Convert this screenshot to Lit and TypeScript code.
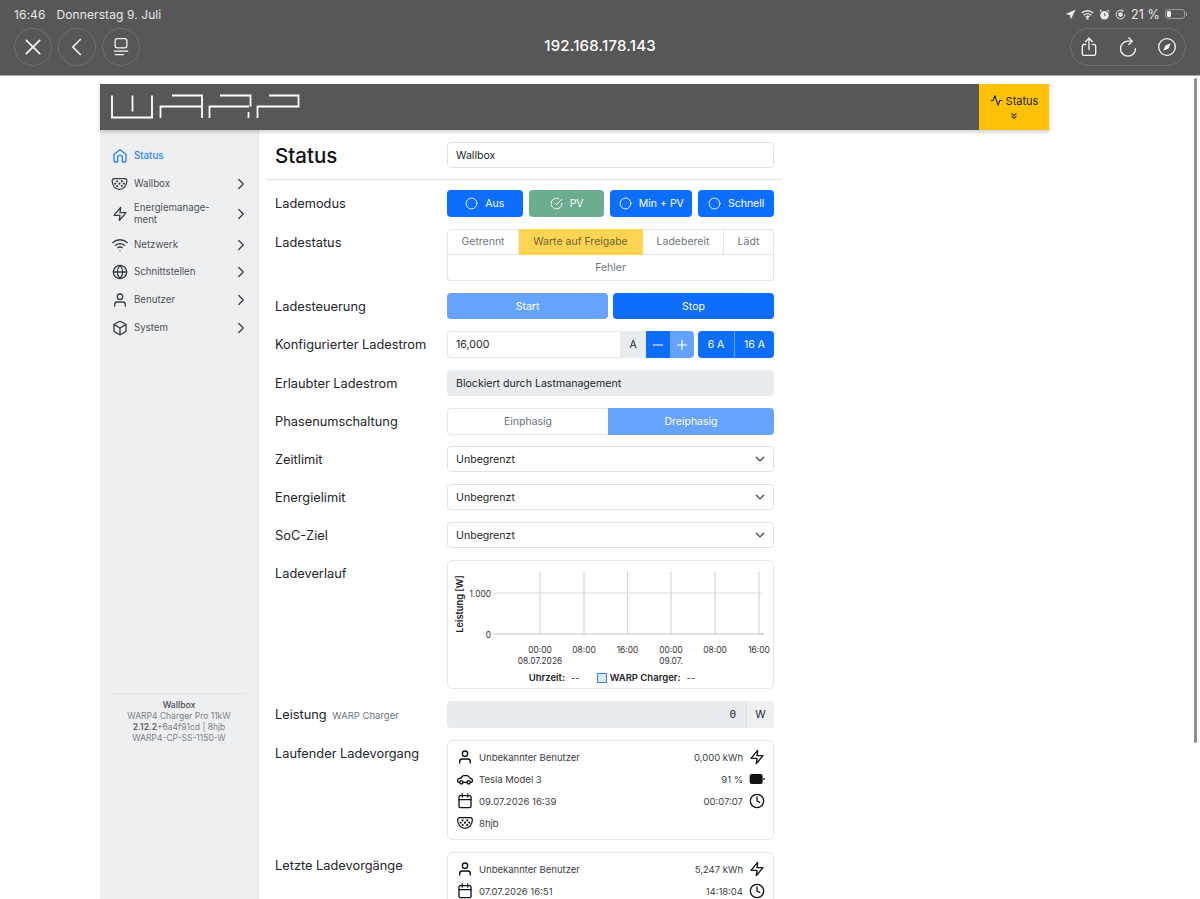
import {LitElement, html, css, svg} from 'lit';
import {customElement} from 'lit/decorators.js';

const feather = (body: unknown, cls = 'ic') => html`<svg class=${cls} viewBox="0 0 24 24" fill="none" stroke="currentColor" stroke-width="2" stroke-linecap="round" stroke-linejoin="round">${body}</svg>`;

const icons = {
  home: svg`<path d="M4 21a1 1 0 0 1-1-1V9.500L12 2.500l9 7V20a1 1 0 0 1-1 1h-4.500v-8a2 2 0 0 0-2-2h-3a2 2 0 0 0-2 2v8z"/>`,
  zap: svg`<polygon points="13 2 3 14 12 14 11 22 21 10 12 10 13 2"/>`,
  wifi: svg`<path d="M1 8.500a16 16 0 0 1 22 0"/><path d="M5 12.600a11 11 0 0 1 14 0"/><path d="M8.600 16.100a6 6 0 0 1 6.800 0"/><line x1="12" y1="20" x2="12" y2="20"/>`,
  globe: svg`<circle cx="12" cy="12" r="10"/><line x1="2" y1="12" x2="22" y2="12"/><path d="M12 2a15.300 15.300 0 0 1 4 10 15.300 15.300 0 0 1-4 10 15.300 15.300 0 0 1-4-10 15.300 15.300 0 0 1 4-10z"/>`,
  user: svg`<path d="M20 21v-2a4 4 0 0 0-4-4H8a4 4 0 0 0-4 4v2"/><circle cx="12" cy="7" r="4"/>`,
  box: svg`<path d="M21 16V8a2 2 0 0 0-1-1.730l-7-4a2 2 0 0 0-2 0l-7 4A2 2 0 0 0 3 8v8a2 2 0 0 0 1 1.730l7 4a2 2 0 0 0 2 0l7-4A2 2 0 0 0 21 16z"/><polyline points="3.270 6.960 12 12.010 20.730 6.960"/><line x1="12" y1="22.080" x2="12" y2="12"/>`,
  chevron: svg`<polyline points="9 18 15 12 9 6"/>`,
  circle: svg`<circle cx="12" cy="12" r="10"/>`,
  check: svg`<path d="M22 11.080V12a10 10 0 1 1-5.930-9.140"/><polyline points="22 4 12 14.010 9 11.010"/>`,
  calendar: svg`<rect x="3" y="4" width="18" height="18" rx="2"/><line x1="16" y1="1.500" x2="16" y2="6"/><line x1="8" y1="1.500" x2="8" y2="6"/><line x1="3" y1="10" x2="21" y2="10"/>`,
  clock: svg`<circle cx="12" cy="12" r="10"/><polyline points="12 6 12 12 16 14"/>`,
  minus: svg`<line x1="5" y1="12" x2="19" y2="12"/>`,
  plus: svg`<line x1="12" y1="5" x2="12" y2="19"/><line x1="5" y1="12" x2="19" y2="12"/>`,
  activity: svg`<polyline points="22 12 18 12 15 21 9 3 6 12 2 12"/>`,
  down2: svg`<polyline points="7 13 12 18 17 13"/><polyline points="7 6 12 11 17 6"/>`,
  car: svg`<path d="M4 17H2.500A1.500 1.500 0 0 1 1 15.500v-2.200c0-1 .7-1.800 1.600-2L6 10.500 8.600 7.600A2 2 0 0 1 10.100 7h5.300a2 2 0 0 1 1.500.7L20 11l1.600.6c.9.4 1.400 1.200 1.400 2.100v1.800a1.500 1.500 0 0 1-1.500 1.500H20"/><line x1="9" y1="17" x2="15" y2="17"/><circle cx="6.500" cy="17" r="2.500"/><circle cx="17.500" cy="17" r="2.500"/>`,
};

const charger = (cls = 'ic') => html`<svg class=${cls} viewBox="0 0 24 24" fill="none" stroke="currentColor" stroke-width="1.800">
  <path d="M4 4h16c1.800 0 3 1.500 3 3.500 0 6.500-4.500 12.500-11 12.500S1 14 1 7.500C1 5.500 2.200 4 4 4z"/>
  <g fill="currentColor" stroke="none">
    <circle cx="8.500" cy="8" r="1.600"/><circle cx="15.500" cy="8" r="1.600"/>
    <circle cx="5.500" cy="11.500" r="1.600"/><circle cx="12" cy="11.500" r="1.600"/><circle cx="18.500" cy="11.500" r="1.600"/>
    <circle cx="8.500" cy="15" r="1.600"/><circle cx="15.500" cy="15" r="1.600"/>
  </g>
</svg>`;

const nav = [
  {name: 'Wallbox', icon: charger('ic wide')},
  {name: html`Energiemanage-<br>ment`, icon: feather(icons.zap)},
  {name: 'Netzwerk', icon: feather(icons.wifi)},
  {name: 'Schnittstellen', icon: feather(icons.globe)},
  {name: 'Benutzer', icon: feather(icons.user)},
  {name: 'System', icon: feather(icons.box)},
];

const ticks = [
  {x: 92, t: '00:00'},
  {x: 136, t: '08:00'},
  {x: 179.5, t: '16:00'},
  {x: 223, t: '00:00'},
  {x: 267, t: '08:00'},
  {x: 311, t: '16:00'},
];

@customElement('app-root')
export class AppRoot extends LitElement {
  renderBrowserBar() {
    return html`
      <header class="browser">
        <div class="ios-status">
          <span class="time">16:46</span>
          <span>Donnerstag 9. Juli</span>
          <span class="ios-right">
            <svg class="st" viewBox="0 0 14 14"><path d="M13.500.5 7.600 13 6.200 7.800 1 6.400z" fill="currentColor"/></svg>
            <svg class="st wifi-st" viewBox="0 0 16 12" fill="none" stroke="currentColor" stroke-width="1.700"><path d="M1 4.200a10 10 0 0 1 14 0M3.400 6.800a6.600 6.600 0 0 1 9.200 0M5.800 9.200a3.200 3.200 0 0 1 4.400 0"/><circle cx="8" cy="10.800" r=".6"/></svg>
            <svg class="st" viewBox="0 0 14 14"><circle cx="7" cy="8" r="5.500" fill="currentColor"/><path d="M1 3.400 3.200 1.200M13 3.400l-2.200-2.200" stroke="currentColor" stroke-width="1.400"/><path d="M7 5v3h2" stroke="#575757" fill="none"/></svg>
            <svg class="st" viewBox="0 0 14 14" fill="none" stroke="currentColor" stroke-width="1.200"><path d="M12.600 7A5.600 5.600 0 1 1 10 2.300"/><path d="m9 .6 1.600 1.800-2 1.300"/><circle cx="7" cy="7" r="2.400" fill="currentColor"/></svg>
            <span class="percent">21 %</span>
            <span class="battery"><span class="battery-level"></span></span>
          </span>
        </div>
        <div class="toolbar">
          <div class="tool-group">
            <span class="round">${feather(svg`<line x1="4" y1="4" x2="20" y2="20"/><line x1="20" y1="4" x2="4" y2="20"/>`, 'tool-ic')}</span>
            <span class="round">${feather(svg`<polyline points="16 3 7 12 16 21"/>`, 'tool-ic')}</span>
            <span class="round">${feather(svg`<rect x="5" y="2" width="14" height="11" rx="2.500" stroke-width="1.500"/><line x1="4" y1="17" x2="20" y2="17" stroke-width="1.500"/><line x1="5" y1="21" x2="15" y2="21" stroke-width="1.500"/>`, 'tool-ic')}</span>
          </div>
          <div class="address">192.168.178.143</div>
          <div class="pill">
            ${feather(svg`<path d="M8 9H6a2 2 0 0 0-2 2v9a2 2 0 0 0 2 2h12a2 2 0 0 0 2-2v-9a2 2 0 0 0-2-2h-2" stroke-width="1.600"/><polyline points="8 5.500 12 1.500 16 5.500" stroke-width="1.600"/><line x1="12" y1="1.500" x2="12" y2="15" stroke-width="1.600"/>`, 'tool-ic')}
            ${feather(svg`<polyline points="13 1 17 5 13 9" stroke-width="1.600"/><path d="M16 5H12a9 9 0 1 0 9 9" stroke-width="1.600"/>`, 'tool-ic')}
            <svg class="tool-ic" viewBox="0 0 24 24" fill="none" stroke="currentColor" stroke-width="1.600"><circle cx="12" cy="12" r="10"/><polygon points="16.500 7.500 13.800 13.800 7.500 16.500 10.200 10.200" fill="currentColor" stroke="none"/></svg>
          </div>
        </div>
      </header>
    `;
  }

  renderNavbar() {
    return html`
      <div class="navbar">
        <svg class="logo" viewBox="0 0 190 26" fill="none" stroke="#fff" stroke-width="1.800">
          <path d="M1 1.500V23.500H42M21.500 1.500V17.500M41 1.500V23.500"/>
          <path d="M49.500 24V12.500H90M61 1.500H91V24"/>
          <path d="M98.500 24V12.500H138M109 1.500H139.500V12.500M137.500 18V24"/>
          <path d="M146.500 24V12.500H187.500V1.500H158"/>
        </svg>
        <button class="status-toggle">
          <span class="status-line">${feather(icons.activity, 'toggle-ic')}Status</span>
          ${feather(icons.down2, 'toggle-down')}
        </button>
      </div>
    `;
  }

  renderSidebar() {
    return html`
      <aside class="sidebar">
        <nav class="menu">
          <a class="item active">${feather(icons.home)}<span>Status</span></a>
          ${nav.map(n => html`<a class="item">${n.icon}<span>${n.name}</span>${feather(icons.chevron, 'chev')}</a>`)}
        </nav>
        <div class="side-foot">
          <b class="foot-title">Wallbox</b>
          <div>WARP4 Charger Pro 11kW</div>
          <div><b>2.12.2</b>+6a4f91cd | 8hjb</div>
          <div>WARP4-CP-SS-1150-W</div>
        </div>
      </aside>
    `;
  }

  renderChart() {
    return html`
      <div class="chart">
        <svg class="plot" viewBox="0 0 325 100" width="325" height="100">
          ${ticks.map(t => svg`<line class="grid-v" x1=${t.x} x2=${t.x} y1="11" y2="73"/>`)}
          <line class="grid-h" x1="46" x2="315" y1="32" y2="32"/>
          <line class="grid-h zero" x1="46" x2="315" y1="73" y2="73"/>
          <line class="point" x1="314" x2="315" y1="73" y2="73"/>
          <text class="tick" x="43" y="36" text-anchor="end">1.000</text>
          <text class="tick" x="43" y="77" text-anchor="end">0</text>
          <text class="axis" transform="translate(15 43) rotate(-90)" text-anchor="middle">Leistung [W]</text>
          ${ticks.map(t => svg`<text class="tick" x=${t.x} y="92" text-anchor="middle">${t.t}</text>`)}
        </svg>
        <div class="dates">
          <span class="date first">08.07.2026</span><span class="date second">09.07.</span>
        </div>
        <div class="legend">
          <b>Uhrzeit:</b><span class="dash">--</span>
          <i class="swatch"></i>
          <b>WARP Charger:</b><span class="dash">--</span>
        </div>
      </div>
    `;
  }

  render() {
    return html`
      ${this.renderBrowserBar()}
      <div class="scrollbar"></div>
      <main class="page">
        ${this.renderNavbar()}
        <div class="body">
          ${this.renderSidebar()}
          <section class="content">
            <div class="title-row">
              <h1>Status</h1>
              <div class="field">Wallbox</div>
            </div>
            <div class="rows">
              <label>Lademodus</label>
              <div class="modes">
                <button class="btn primary">${feather(icons.circle, 'btn-ic')}Aus</button>
                <button class="btn success">${feather(icons.check, 'btn-ic')}PV</button>
                <button class="btn primary">${feather(icons.circle, 'btn-ic')}Min + PV</button>
                <button class="btn primary">${feather(icons.circle, 'btn-ic')}Schnell</button>
              </div>

              <label>Ladestatus</label>
              <div class="states">
                <span class="state first">Getrennt</span>
                <span class="state warn">Warte auf Freigabe</span>
                <span class="state">Ladebereit</span>
                <span class="state last">Lädt</span>
                <span class="state wide-state">Fehler</span>
              </div>

              <label>Ladesteuerung</label>
              <div class="pair">
                <button class="btn light">Start</button>
                <button class="btn primary">Stop</button>
              </div>

              <label>Konfigurierter Ladestrom</label>
              <div class="current">
                <div class="group grow">
                  <span class="value">16,000</span>
                  <span class="unit">A</span>
                  <button class="step primary">${feather(icons.minus, 'step-ic')}</button>
                  <button class="step light end">${feather(icons.plus, 'step-ic')}</button>
                </div>
                <div class="group">
                  <button class="preset">6 A</button>
                  <button class="preset divided">16 A</button>
                </div>
              </div>

              <label>Erlaubter Ladestrom</label>
              <div class="field readonly">Blockiert durch Lastmanagement</div>

              <label>Phasenumschaltung</label>
              <div class="phase">
                <span class="phase-off">Einphasig</span>
                <span class="phase-on">Dreiphasig</span>
              </div>

              ${['Zeitlimit', 'Energielimit', 'SoC-Ziel'].map(l => html`
                <label>${l}</label>
                <div class="field select">Unbegrenzt
                  <svg class="caret" viewBox="0 0 16 16" fill="none" stroke="#343a40" stroke-width="2" stroke-linecap="round" stroke-linejoin="round"><path d="m2 5 6 6 6-6"/></svg>
                </div>
              `)}

              <label>Ladeverlauf</label>
              ${this.renderChart()}

              <label>Leistung <small>WARP Charger</small></label>
              <div class="meter"><span class="meter-value">0</span><span class="meter-unit">W</span></div>

              <label>Laufender Ladevorgang</label>
              <div class="card">
                <div class="charge-row">${feather(icons.user, 'ci')}<span class="grow">Unbekannter Benutzer</span><span>0,000 kWh</span>${feather(icons.zap, 'ci')}</div>
                <div class="charge-row">${feather(icons.car, 'ci')}<span class="grow">Tesla Model 3</span><span>91 %</span>
                  <svg class="ci" viewBox="0 0 24 24"><rect class="cell" x="1" y="4.500" width="19.500" height="15" rx="3"/><rect class="cell" x="21.500" y="10.500" width="2" height="3"/></svg>
                </div>
                <div class="charge-row">${feather(icons.calendar, 'ci')}<span class="grow">09.07.2026 16:39</span><span>00:07:07</span>${feather(icons.clock, 'ci')}</div>
                <div class="charge-row">${charger('ci')}<span class="grow">8hjb</span></div>
              </div>

              <label>Letzte Ladevorgänge</label>
              <div class="card">
                <div class="charge-row">${feather(icons.user, 'ci')}<span class="grow">Unbekannter Benutzer</span><span>5,247 kWh</span>${feather(icons.zap, 'ci')}</div>
                <div class="charge-row">${feather(icons.calendar, 'ci')}<span class="grow">07.07.2026 16:51</span><span>14:18:04</span>${feather(icons.clock, 'ci')}</div>
              </div>
            </div>
          </section>
        </div>
      </main>
    `;
  }

  static styles = css`
    :host {
      display: flex;
      flex-direction: column;
      position: relative;
      height: 899px;
      overflow: hidden;
      background: #fff;
      font-family: Inter, "Liberation Sans", sans-serif;
      color: #212529;
    }
    button {
      font: inherit;
      border: none;
      padding: 0;
    }

    .browser {
      flex: none;
      box-sizing: border-box;
      border-bottom: 1px solid #a9a9a9;
      height: 76px;
      background: #575757;
      color: #f2f2f2;
      padding: 7px 14px 0;
      display: flex;
      flex-direction: column;
    }
    .ios-status {
      display: flex;
      align-items: center;
      height: 14px;
      font-size: 12px;
      letter-spacing: 0.1px;
      color: #e8e8e8;
    }
    .time {
      margin-right: 11px;
    }
    .ios-right {
      margin-left: auto;
      display: flex;
      align-items: center;
      gap: 5px;
    }
    .percent {
      font-size: 12.500px;
    }
    .st {
      width: 11px;
      height: 11px;
    }
    .wifi-st {
      width: 13px;
    }
    .battery {
      position: relative;
      width: 20px;
      height: 10px;
      margin-right: 1px;
      border: 1px solid #9a9a9a;
      border-radius: 3px;
      box-sizing: border-box;
      padding: 1px;
    }
    .battery::after {
      content: "";
      position: absolute;
      top: 2px;
      right: -3px;
      width: 1px;
      height: 4px;
      background: #9a9a9a;
    }
    .battery-level {
      display: block;
      width: 4px;
      height: 100%;
      border-radius: 1px;
      background: #f2f2f2;
    }
    .toolbar {
      display: grid;
      grid-template-columns: 1fr auto 1fr;
      align-items: center;
      margin-top: 7px;
    }
    .tool-group {
      display: flex;
      gap: 6px;
    }
    .round {
      width: 38px;
      height: 38px;
      box-sizing: border-box;
      border: 1px solid #6e6e6e;
      border-radius: 50%;
      display: flex;
      align-items: center;
      justify-content: center;
    }
    .tool-ic {
      width: 20px;
      height: 20px;
      color: #f5f5f5;
    }
    .address {
      font-size: 15px;
      font-weight: 500;
      color: #fff;
      letter-spacing: 0.2px;
      padding-bottom: 3px;
    }
    .pill {
      justify-self: end;
      height: 38px;
      width: 116px;
      box-sizing: border-box;
      padding: 0 8px;
      border: 1px solid #6e6e6e;
      border-radius: 19px;
      display: flex;
      align-items: center;
      justify-content: space-between;
    }

    .scrollbar {
      position: absolute;
      top: 78px;
      right: 3px;
      width: 3px;
      height: 665px;
      border-radius: 2px;
      background: #8f8f8f;
    }

    .page {
      flex: 1;
      min-height: 0;
      width: 949px;
      margin-left: 100px;
      padding-top: 8px;
      display: flex;
      flex-direction: column;
    }
    .navbar {
      flex: none;
      height: 46px;
      background: #575757;
      display: flex;
      align-items: center;
      justify-content: space-between;
      padding-left: 11px;
      box-shadow: 0 2px 4px rgba(0, 0, 0, 0.2);
      position: relative;
      z-index: 1;
    }
    .logo {
      width: 190px;
      height: 26px;
    }
    .status-toggle {
      width: 70px;
      height: 100%;
      background: #ffc107;
      color: #212529;
      display: flex;
      flex-direction: column;
      align-items: center;
      justify-content: center;
      font-size: 11px;
    }
    .status-line {
      display: flex;
      align-items: center;
      gap: 3px;
    }
    .toggle-ic {
      width: 13px;
      height: 13px;
    }
    .toggle-down {
      width: 10px;
      height: 10px;
      margin-top: 3px;
      stroke-width: 2.500;
    }

    .body {
      flex: 1;
      min-height: 0;
      display: flex;
    }
    .sidebar {
      width: 159px;
      flex: none;
      box-sizing: border-box;
      background: #eeeff1;
      border-right: 1px solid #e4e5e7;
      padding: 12px 0 155px;
      display: flex;
      flex-direction: column;
      justify-content: space-between;
    }
    .menu {
      display: flex;
      flex-direction: column;
    }
    .item {
      display: flex;
      align-items: center;
      box-sizing: border-box;
      min-height: 27.700px;
      padding: 4.650px 8px 4.650px 12px;
      font-size: 9.700px;
      line-height: 12px;
      color: #4d5156;
      gap: 6px;
    }
    .item span {
      flex: 1;
    }
    .item.active {
      color: #2b85f7;
      font-weight: 500;
    }
    .ic {
      width: 16px;
      height: 16px;
      flex: none;
      color: #3b3f44;
    }
    .active .ic {
      color: #2b85f7;
    }
    .ic.wide {
      width: 17px;
      margin-left: -1px;
    }
    .chev {
      width: 18px;
      height: 18px;
      flex: none;
      color: #3b3f44;
      stroke-width: 1.700;
    }
    .side-foot {
      margin: 0 12px;
      padding-top: 6px;
      border-top: 1px solid #e2e3e5;
      text-align: center;
      font-size: 8.500px;
      line-height: 11.100px;
      color: #7b8087;
    }
    .side-foot b {
      font-weight: 600;
      color: #5c6066;
    }

    .content {
      width: 531px;
      flex: none;
      box-sizing: border-box;
      padding: 0 8px;
    }
    .title-row {
      display: grid;
      grid-template-columns: 172px 327px;
      padding: 12px 8px 11px;
      border-bottom: 1px solid #e3e3e3;
      box-shadow: 0 1px 1px rgba(0, 0, 0, 0.03);
      align-items: center;
      margin-bottom: 10px;
    }
    h1 {
      margin: 0;
      font-size: 20.500px;
      font-weight: 500;
      color: #111;
    }
    .rows {
      display: grid;
      grid-template-columns: 172px 327px;
      gap: 12px 0;
      padding: 0 8px;
      align-items: start;
    }
    label {
      height: 26px;
      font-size: 12.800px;
      line-height: 27px;
      color: #212529;
    }
    small {
      font-size: 9.500px;
      color: #6c757d;
      margin-left: 2px;
    }
    .field {
      height: 26px;
      box-sizing: border-box;
      border: 1px solid #e0e2e5;
      border-radius: 4px;
      padding: 0 8px;
      display: flex;
      align-items: center;
      font-size: 10.600px;
      color: #212529;
      background: #fff;
    }
    .field.readonly {
      background: #e9ecef;
      border-color: #e9ecef;
    }
    .field.select {
      justify-content: space-between;
    }
    .caret {
      width: 10px;
      height: 10px;
    }

    .btn {
      height: 27px;
      border-radius: 4px;
      font-size: 10.500px;
      color: #fff;
      display: flex;
      align-items: center;
      justify-content: center;
      gap: 7px;
    }
    .primary {
      background: #0d6efd;
      color: #fff;
    }
    .light {
      background: #66a3fe;
      color: #fff;
    }
    .success {
      background: #6aae8f;
      color: #fff;
    }
    .btn-ic {
      width: 13px;
      height: 13px;
      stroke-width: 1.700;
    }
    .modes {
      display: grid;
      grid-template-columns: 1fr 1fr 1.080fr 1fr;
      gap: 6px;
    }
    .states {
      display: grid;
      grid-template-columns: 72fr 124fr 81fr 50fr;
      height: 51.500px;
    }
    .state {
      display: flex;
      align-items: center;
      justify-content: center;
      box-sizing: border-box;
      font-size: 10.500px;
      color: #6c757d;
      border-top: 1px solid #e3e5e8;
      border-bottom: 1px solid #e3e5e8;
      border-right: 1px solid #e3e5e8;
    }
    .state.first {
      border-left: 1px solid #e3e5e8;
      border-top-left-radius: 4px;
    }
    .state.last {
      border-top-right-radius: 4px;
    }
    .state.warn {
      background: #ffd453;
      color: #6c6536;
      border-color: #ffd453;
    }
    .state.wide-state {
      grid-column: 1 / -1;
      border-left: 1px solid #e3e5e8;
      border-top: none;
      border-radius: 0 0 4px 4px;
      padding-top: 1px;
    }
    .pair {
      display: grid;
      grid-template-columns: 1fr 1fr;
      gap: 5px;
    }
    .pair .btn {
      height: 26.500px;
      padding-top: 1px;
    }
    .current {
      display: flex;
      gap: 4px;
      height: 27px;
    }
    .group {
      display: flex;
      flex: none;
    }
    .group.grow {
      flex: 1;
    }
    .value {
      flex: 1;
      box-sizing: border-box;
      border: 1px solid #e3e5e8;
      border-right: none;
      border-radius: 4px 0 0 4px;
      padding-left: 8px;
      display: flex;
      align-items: center;
      font-size: 10.600px;
    }
    .unit {
      width: 26px;
      background: #e9ecef;
      display: flex;
      align-items: center;
      justify-content: center;
      font-size: 10.500px;
    }
    .step {
      width: 24px;
      display: flex;
      align-items: center;
      justify-content: center;
    }
    .step.end {
      border-radius: 0 4px 4px 0;
    }
    .step-ic {
      width: 16px;
      height: 16px;
      stroke-width: 1.800;
    }
    .preset {
      background: #0d6efd;
      color: #fff;
      font-size: 10.500px;
      width: 36px;
      border-radius: 4px 0 0 4px;
    }
    .preset.divided {
      width: 40px;
      border-left: 1px solid #66a3fe;
      border-radius: 0 4px 4px 0;
    }
    .phase {
      display: grid;
      grid-template-columns: 161px 166px;
      height: 26px;
      font-size: 10.500px;
      text-align: center;
      line-height: 27px;
    }
    .phase-off {
      box-sizing: border-box;
      border: 1px solid #e3e5e8;
      border-right: none;
      border-radius: 4px 0 0 4px;
      color: #6c757d;
      line-height: 25px;
    }
    .phase-on {
      background: #66a3fe;
      color: #fff;
      border-radius: 0 4px 4px 0;
    }

    .chart {
      position: relative;
      height: 129px;
      box-sizing: border-box;
      border: 1px solid #e3e5e8;
      border-radius: 5px;
      display: flex;
      flex-direction: column;
    }
    .plot {
      display: block;
      flex: none;
    }
    .grid-v {
      stroke: #cfcfcf;
      stroke-width: 1;
    }
    .grid-h {
      stroke: #dcdcdc;
      stroke-width: 1;
    }
    .grid-h.zero {
      stroke: #c4c4c4;
    }
    .point {
      stroke: #2b85f7;
    }
    .tick {
      font-size: 8.400px;
      fill: #333;
    }
    .axis {
      font-size: 9.300px;
      font-weight: 600;
      fill: #222;
    }
    .dates {
      height: 7px;
      position: relative;
      font-size: 8.400px;
      color: #333;
    }
    .date {
      position: absolute;
      top: -5px;
      transform: translateX(-50%);
    }
    .date.first {
      left: 92px;
    }
    .date.second {
      left: 223px;
    }
    .legend {
      display: flex;
      align-items: center;
      justify-content: center;
      margin-top: 4px;
      font-size: 9.500px;
      color: #222;
      padding-left: 3px;
    }
    .legend b {
      font-weight: 600;
    }
    .dash {
      margin-left: 6px;
      color: #444;
    }
    .swatch {
      width: 10px;
      height: 10px;
      box-sizing: border-box;
      margin: 0 3px 0 17px;
      border: 1px solid #2b85f7;
      background: #dbe9fb;
    }

    .meter {
      display: flex;
      height: 27px;
      border-radius: 4px;
      overflow: hidden;
      background: #e9ecef;
    }
    .meter-value {
      flex: 1;
      text-align: right;
      padding-right: 10px;
      line-height: 27px;
      font-family: "DejaVu Sans Mono", "Liberation Mono", monospace;
      font-size: 11px;
    }
    .meter-unit {
      width: 28px;
      box-sizing: border-box;
      background: #eef0f2;
      border-left: 1px solid #dfe1e4;
      text-align: center;
      font-size: 10.500px;
      line-height: 27px;
    }

    .card {
      box-sizing: border-box;
      border: 1px solid #e3e5e8;
      border-radius: 5px;
      padding: 5px 8px 5px 9px;
    }
    .charge-row {
      display: flex;
      align-items: center;
      height: 22px;
      gap: 6px;
      font-size: 9.500px;
      color: #3a3d41;
    }
    .charge-row .grow {
      flex: 1;
    }
    .ci {
      width: 16px;
      height: 16px;
      flex: none;
      color: #111;
    }
    .cell {
      fill: #111;
    }
  `;
}

declare global {
  interface HTMLElementTagNameMap {
    'app-root': AppRoot;
  }
}
